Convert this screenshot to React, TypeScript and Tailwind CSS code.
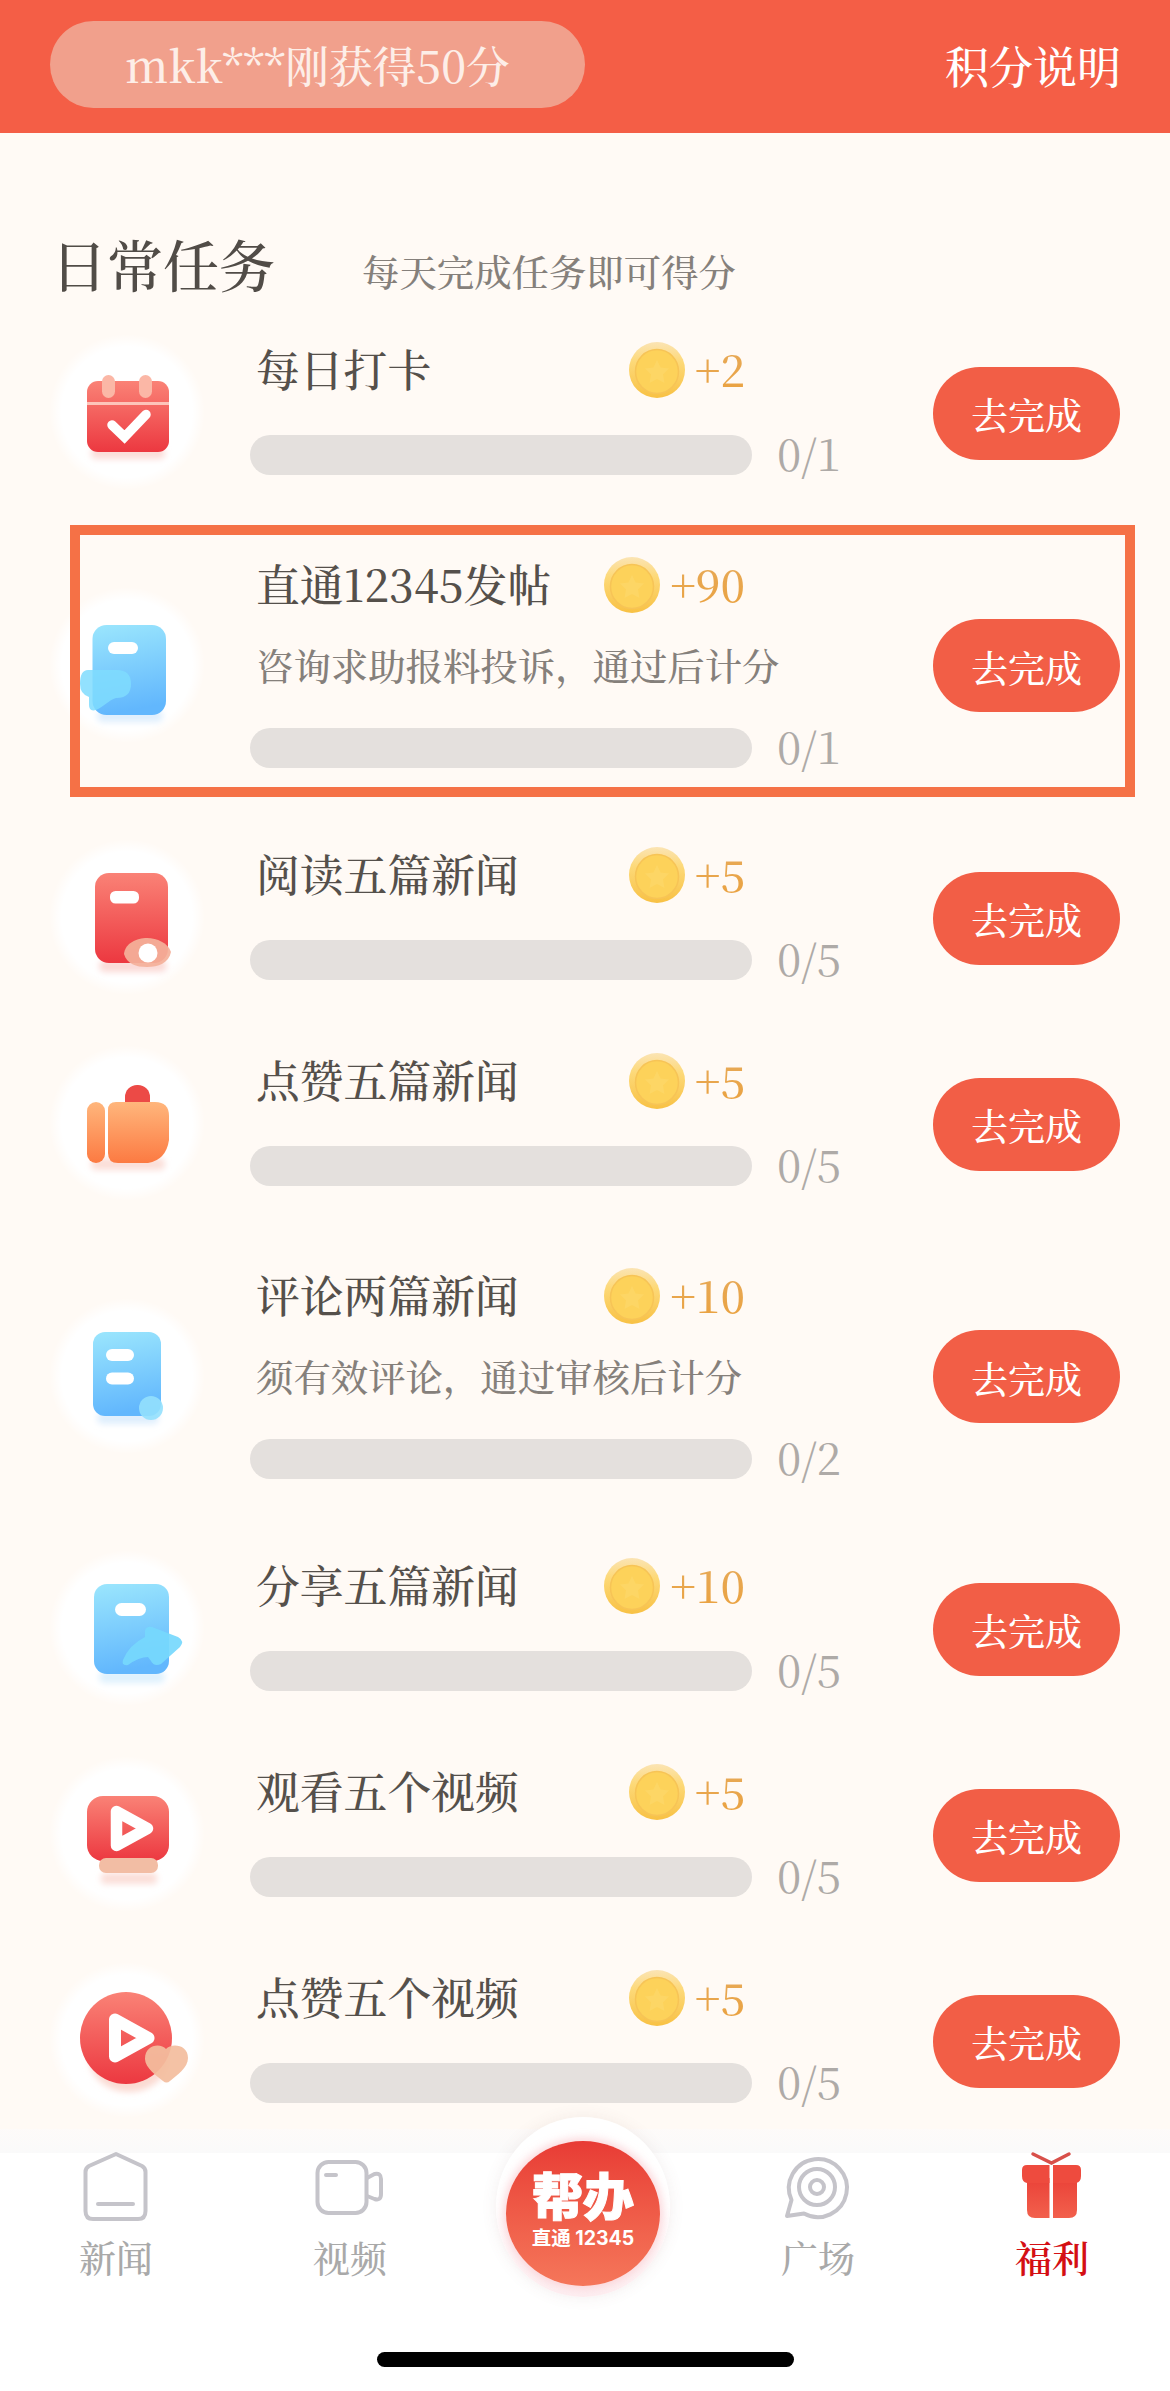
import React from 'react';

type IconName = 'calendar' | 'post' | 'read' | 'thumb' | 'comment' | 'share' | 'video' | 'videoLike';

interface Task {
  icon: IconName;
  title: string;
  note?: string;
  points: number;
  total: number;
  highlighted?: boolean;
}

const tasks: Task[] = [
  { icon: 'calendar', title: '每日打卡', points: 2, total: 1 },
  { icon: 'post', title: '直通12345发帖', note: '咨询求助报料投诉，通过后计分', points: 90, total: 1, highlighted: true },
  { icon: 'read', title: '阅读五篇新闻', points: 5, total: 5 },
  { icon: 'thumb', title: '点赞五篇新闻', points: 5, total: 5 },
  { icon: 'comment', title: '评论两篇新闻', note: '须有效评论，通过审核后计分', points: 10, total: 2 },
  { icon: 'share', title: '分享五篇新闻', points: 10, total: 5 },
  { icon: 'video', title: '观看五个视频', points: 5, total: 5 },
  { icon: 'videoLike', title: '点赞五个视频', points: 5, total: 5 }
];

// Shared gradients, referenced by id from every icon below
function Gradients() {
  return (
    <svg className="absolute h-0 w-0" aria-hidden="true">
      <defs>
        <linearGradient id="red" x1="0" y1="0" x2="0" y2="1">
          <stop offset="0" stopColor="#fa8276" />
          <stop offset="1" stopColor="#ec3840" />
        </linearGradient>
        <linearGradient id="blue" x1="0" y1="0" x2="0.15" y2="1">
          <stop offset="0" stopColor="#9be6fd" />
          <stop offset="1" stopColor="#62b7fd" />
        </linearGradient>
        <linearGradient id="orange" x1="0" y1="0" x2="0" y2="1">
          <stop offset="0" stopColor="#ffb67c" />
          <stop offset="1" stopColor="#fc7a42" />
        </linearGradient>
        <linearGradient id="gift" x1="0" y1="0" x2="0" y2="1">
          <stop offset="0" stopColor="#ea4238" />
          <stop offset="1" stopColor="#f2604c" />
        </linearGradient>
        <linearGradient id="coin" x1="0" y1="0" x2="0" y2="1">
          <stop offset="0" stopColor="#fbe4b4" />
          <stop offset="0.35" stopColor="#fdd978" />
          <stop offset="1" stopColor="#f8c144" />
        </linearGradient>
        <radialGradient id="halo">
          <stop offset="0.84" stopColor="#ffffff" />
          <stop offset="1" stopColor="#ffffff" stopOpacity="0" />
        </radialGradient>
        <filter id="soft" x="-30%" y="-80%" width="160%" height="260%">
          <feGaussianBlur stdDeviation="3" />
        </filter>
      </defs>
    </svg>
  );
}

function TaskIcon({ name }: { name: IconName }) {
  return (
    <svg viewBox="1 0 160 160" className="h-40 w-40 shrink-0">
      <circle cx="80" cy="79" r="78" fill="url(#halo)" />
      {name === 'calendar' && (
        <>
          <rect x="44" y="114" width="74" height="12" rx="5" fill="#fbdcd8" filter="url(#soft)" />
          <rect x="40" y="48" width="82" height="71" rx="11" fill="url(#red)" />
          <rect x="55" y="42" width="13" height="23" rx="6.5" fill="#fbb7a6" />
          <rect x="92" y="42" width="13" height="23" rx="6.5" fill="#fbb7a6" />
          <path d="M40 70.500H122" stroke="#fdc4ba" strokeWidth="3" />
          <path d="M65 92L77.500 104L99 81.500" fill="none" stroke="#fff" strokeWidth="9.500" strokeLinecap="round" />
        </>
      )}
      {name === 'post' && (
        <>
          <rect x="50" y="124" width="66" height="12" rx="6" fill="#deeefd" filter="url(#soft)" />
          <rect x="45.500" y="39" width="73.500" height="90" rx="14" fill="url(#blue)" />
          <rect x="61" y="56" width="30" height="12" rx="6" fill="#fff" />
          <path
            d="M41 84H70Q84 84 84 98Q84 112 69 112C62 114 56 121 49 124Q42 126 42 119V111Q33 108 33 98Q33 84 41 84Z"
            fill="#7fdcfe"
            fillOpacity="0.85"
          />
        </>
      )}
      {name === 'read' && (
        <>
          <rect x="52" y="122" width="68" height="12" rx="6" fill="#fbd9d5" filter="url(#soft)" />
          <rect x="48" y="35" width="73" height="90" rx="14" fill="url(#red)" />
          <rect x="63" y="53" width="29" height="12.500" rx="5.500" fill="#fff" />
          <path d="M77 116C78 105 90 100 100 100S121 105 124 114C122 125 111 129 100 129S80 126 77 116Z" fill="#f4b09a" fillOpacity="0.93" />
          <circle cx="101" cy="115" r="9.500" fill="#fff" />
        </>
      )}
      {name === 'thumb' && (
        <>
          <rect x="44" y="114" width="74" height="12" rx="5" fill="#fbded8" filter="url(#soft)" />
          <rect x="78" y="41" width="25" height="36" rx="12" fill="#ec4a46" />
          <rect x="40" y="58" width="18" height="61" rx="9" fill="url(#orange)" />
          <path d="M69 58H108Q122 58 122 72V96Q119 116 101 119H71Q61 119 61 109V66Q61 58 69 58Z" fill="url(#orange)" />
        </>
      )}
      {name === 'comment' && (
        <>
          <rect x="50" y="115" width="62" height="12" rx="6" fill="#deeefd" filter="url(#soft)" />
          <rect x="46" y="35" width="68" height="84" rx="12" fill="url(#blue)" />
          <rect x="59" y="52" width="28" height="12" rx="6" fill="#fff" />
          <rect x="59" y="75.500" width="28" height="12" rx="6" fill="#fff" />
          <circle cx="104" cy="111" r="12" fill="#94e0fd" fillOpacity="0.9" />
        </>
      )}
      {name === 'share' && (
        <>
          <rect x="52" y="122" width="66" height="12" rx="6" fill="#def1fd" filter="url(#soft)" />
          <rect x="47" y="35" width="75" height="90" rx="13" fill="url(#blue)" />
          <rect x="68" y="54" width="31" height="13" rx="6.500" fill="#fff" />
          <path
            d="M98 82Q99 77 105 78L131 88Q138 92 133 98L114 115Q107 118 104 112L101 108Q92 108 81 116Q74 117 76 111Q82 96 98 88Z"
            fill="#76d8fd"
            fillOpacity="0.92"
          />
        </>
      )}
      {name === 'video' && (
        <>
          <rect x="54" y="118" width="56" height="11" rx="4" fill="#fbded8" filter="url(#soft)" />
          <rect x="40" y="41" width="82" height="65" rx="16" fill="url(#red)" />
          <rect x="52" y="103" width="59" height="15" rx="7" fill="#f2bda4" />
          <path d="M69.500 56.500V90.500L100.500 73.500Z" fill="none" stroke="#fff" strokeWidth="11.500" strokeLinejoin="round" />
        </>
      )}
      {name === 'videoLike' && (
        <>
          <ellipse cx="82" cy="97" rx="40" ry="34" fill="#fbdad2" filter="url(#soft)" />
          <circle cx="79" cy="77" r="46" fill="url(#red)" />
          <path d="M68 58.500V95.500L101.500 77Z" fill="none" stroke="#fff" strokeWidth="12" strokeLinejoin="round" />
          <path
            d="M119 88C114 82 98 83 98 98C98 107 110 115 116 120Q119.500 123 123 120C130 114 141 107 141 97C141 83 124 82 119 88Z"
            fill="#f3bd9e"
            fillOpacity="0.93"
          />
        </>
      )}
    </svg>
  );
}

function Coin() {
  return (
    <svg viewBox="0 0 58 58" className="h-[58px] w-[58px] shrink-0">
      <ellipse cx="29" cy="28" rx="28" ry="28" fill="url(#coin)" />
      <ellipse cx="29" cy="29.500" rx="21.500" ry="22" fill="#fdd25a" stroke="#f7c456" strokeWidth="1.500" />
      <path
        d="M29 18L32.500 25.500L41 26.500L35 32.500L36.500 41L29 37L21.500 41L23 32.500L17 26.500L25.500 25.500Z"
        fill="#fdd665"
      />
    </svg>
  );
}

function TaskRow({ task }: { task: Task }) {
  return (
    <li className={`relative flex shrink-0 items-center pl-12 pr-[50px] ${task.note ? 'h-[299px]' : 'h-[206px]'}`}>
      <TaskIcon name={task.icon} />

      <div className={`ml-[42px] w-[602px] self-stretch ${task.note ? 'pt-[38px]' : 'pt-[29px]'}`}>
        <div className="ml-1.5 flex h-16 w-[489px] items-center justify-between whitespace-nowrap">
          <h2 className="pb-[5px] text-[43.8px] font-medium leading-[59px] text-[#55504b]">{task.title}</h2>
          <div className="flex items-center gap-[9px]">
            <Coin />
            <span className="bg-gradient-to-b from-[#e6ab5c] to-[#eba038] bg-clip-text pb-[5px] text-[43.8px] font-medium leading-[59px] text-transparent">
              +{task.points}
            </span>
          </div>
        </div>
        {task.note && (
          <p className="ml-1.5 mt-[19px] h-14 whitespace-nowrap text-[37.4px] font-medium leading-[56px] text-[#85807b]">{task.note}</p>
        )}
        <div className={`flex h-10 items-center gap-[25px] ${task.note ? 'mt-[35px]' : 'mt-8'}`}>
          <div className="h-10 w-[502px] rounded-full bg-[#e4e0dd]" />
          <span className="pb-[5px] text-[44px] leading-[35px] text-[#aeaaa7]">0/{task.total}</span>
        </div>
      </div>

      <button className="ml-auto h-[93px] w-[187px] rounded-full bg-[#f25e46] pt-1 text-[37px] font-medium text-white">去完成</button>

      {task.highlighted && (
        <div className="absolute left-[70px] top-[9px] h-[272px] w-[1065px] border-[10.5px] border-[#f57146]" />
      )}
    </li>
  );
}

function HomeIcon() {
  return (
    <svg viewBox="0 0 72 68" className="h-[68px] w-[72px] overflow-visible" fill="none" stroke="#c5c4ca" strokeWidth="4" strokeLinecap="round" strokeLinejoin="round">
      <path d="M36 1L62 13Q65.500 15 65.500 19V58Q65.500 66 58 66H13Q5.500 66 5.500 58V19Q5.500 15 9 13Z" />
      <path d="M18 51H53" />
    </svg>
  );
}

function VideoIcon() {
  return (
    <svg viewBox="0 0 72 68" className="h-[68px] w-[72px] overflow-visible" fill="none" stroke="#c5c4ca" strokeWidth="4" strokeLinecap="round" strokeLinejoin="round">
      <rect x="3.500" y="9" width="49" height="51" rx="11" />
      <path d="M12 22H22M53 25L60.500 21Q67 19.500 67 26V41Q67 48 60.500 46L53 43" />
    </svg>
  );
}

function SquareIcon() {
  return (
    <svg viewBox="0 0 72 68" className="h-[68px] w-[72px] overflow-visible" fill="none" stroke="#c5c4ca" strokeWidth="4" strokeLinejoin="round">
      <path d="M9.500 47A29 29 0 1 1 22 60.500L5 63Z" />
      <circle cx="35" cy="34" r="18" />
      <circle cx="35" cy="34" r="7" />
    </svg>
  );
}

function GiftIcon() {
  return (
    <svg viewBox="0 0 72 68" className="h-[68px] w-[72px] overflow-visible">
      <path d="M17 1L35.500 10L53 1" fill="none" stroke="#d8504a" strokeWidth="3.500" strokeLinecap="round" />
      <path d="M11 25H33.500V65H19Q11 65 11 57ZM37 25H61V57Q61 65 53 65H37Z" fill="url(#gift)" />
      <path d="M11 12H33.500V30H11Q6 29 6 23V17Q6 12 11 12ZM37 12H60Q65 12 65 17V23Q65 29 60 30H37Z" fill="#ee4b3e" />
    </svg>
  );
}

function NavItem({ icon, label, active }: { icon: React.ReactNode; label: string; active?: boolean }) {
  return (
    <a className="flex flex-col items-center pr-0.5">
      {icon}
      <span className={`mt-2 text-[37px] leading-[56px] ${active ? 'font-semibold text-[#d40f14]' : 'font-medium text-[#a9a9a9]'}`}>
        {label}
      </span>
    </a>
  );
}

export default function App() {
  return (
    <div className="flex h-[2391px] w-[1170px] flex-col overflow-hidden bg-[#fffaf5] font-['Noto_Serif_CJK_SC','Liberation_Serif','Noto_Sans_CJK_SC',serif]">
      <Gradients />

      <header className="flex h-[133px] shrink-0 items-start justify-between bg-[#f45e46] pl-[50px] pr-[49px] pt-[21px]">
        <div className="flex h-[87px] w-[535px] items-center justify-center rounded-full bg-[#f1a08c] text-[43.7px] font-medium text-[#fdeee8]">
          <span className="whitespace-nowrap">mkk***刚获得50分</span>
        </div>
        <a className="text-[44px] font-medium leading-[88px] text-white">积分说明</a>
      </header>

      {/* Section heading */}
      <div className="flex h-[177px] shrink-0 items-end pb-[13px] pl-[51px]">
        <h1 className="text-[56px] font-medium leading-[68px] text-[#514c47]">日常任务</h1>
        <p className="ml-[87px] text-[37.4px] font-medium leading-[51px] text-[#85807b]">每天完成任务即可得分</p>
      </div>

      <ul className="relative flex h-[1843px] shrink-0 flex-col overflow-hidden">
        {tasks.map((task) => (
          <TaskRow key={task.icon} task={task} />
        ))}
        <li className="absolute inset-x-0 bottom-0 h-6 bg-gradient-to-b from-[#fdfbfb]/70 to-[#fafafa]" />
      </ul>

      {/* Tab bar */}
      <nav className="relative grid h-[238px] shrink-0 grid-cols-5 bg-white">
        <NavItem icon={<HomeIcon />} label="新闻" />
        <NavItem icon={<VideoIcon />} label="视频" />
        <a className="relative">
          <div className="absolute left-[28px] top-[-36px] flex h-[180px] w-[174px] flex-col items-center rounded-[50%] bg-gradient-to-b from-white via-white to-[#fdeef1] pt-[24px] shadow-[0_0_16px_rgba(120,80,80,0.09)]">
            <div className="flex h-[145px] w-[154px] flex-col items-center rounded-[50%] bg-gradient-to-b from-[#e83b35] to-[#f5765a] pt-[27px] font-['Inter','Noto_Sans_CJK_SC',sans-serif] text-white shadow-[0_0_8px_3px_rgba(250,205,210,0.8)]">
              <span className="text-[51px] font-black leading-[60px] [-webkit-text-stroke:1px_white]">帮办</span>
              <span className="-mt-0.5 whitespace-nowrap text-[19.5px] font-bold leading-6">直通 12345</span>
            </div>
          </div>
        </a>
        <NavItem icon={<SquareIcon />} label="广场" />
        <NavItem icon={<GiftIcon />} label="福利" active />
        <div className="absolute left-[377px] top-[199px] h-[15px] w-[417px] rounded-full bg-black" />
      </nav>
    </div>
  );
}
